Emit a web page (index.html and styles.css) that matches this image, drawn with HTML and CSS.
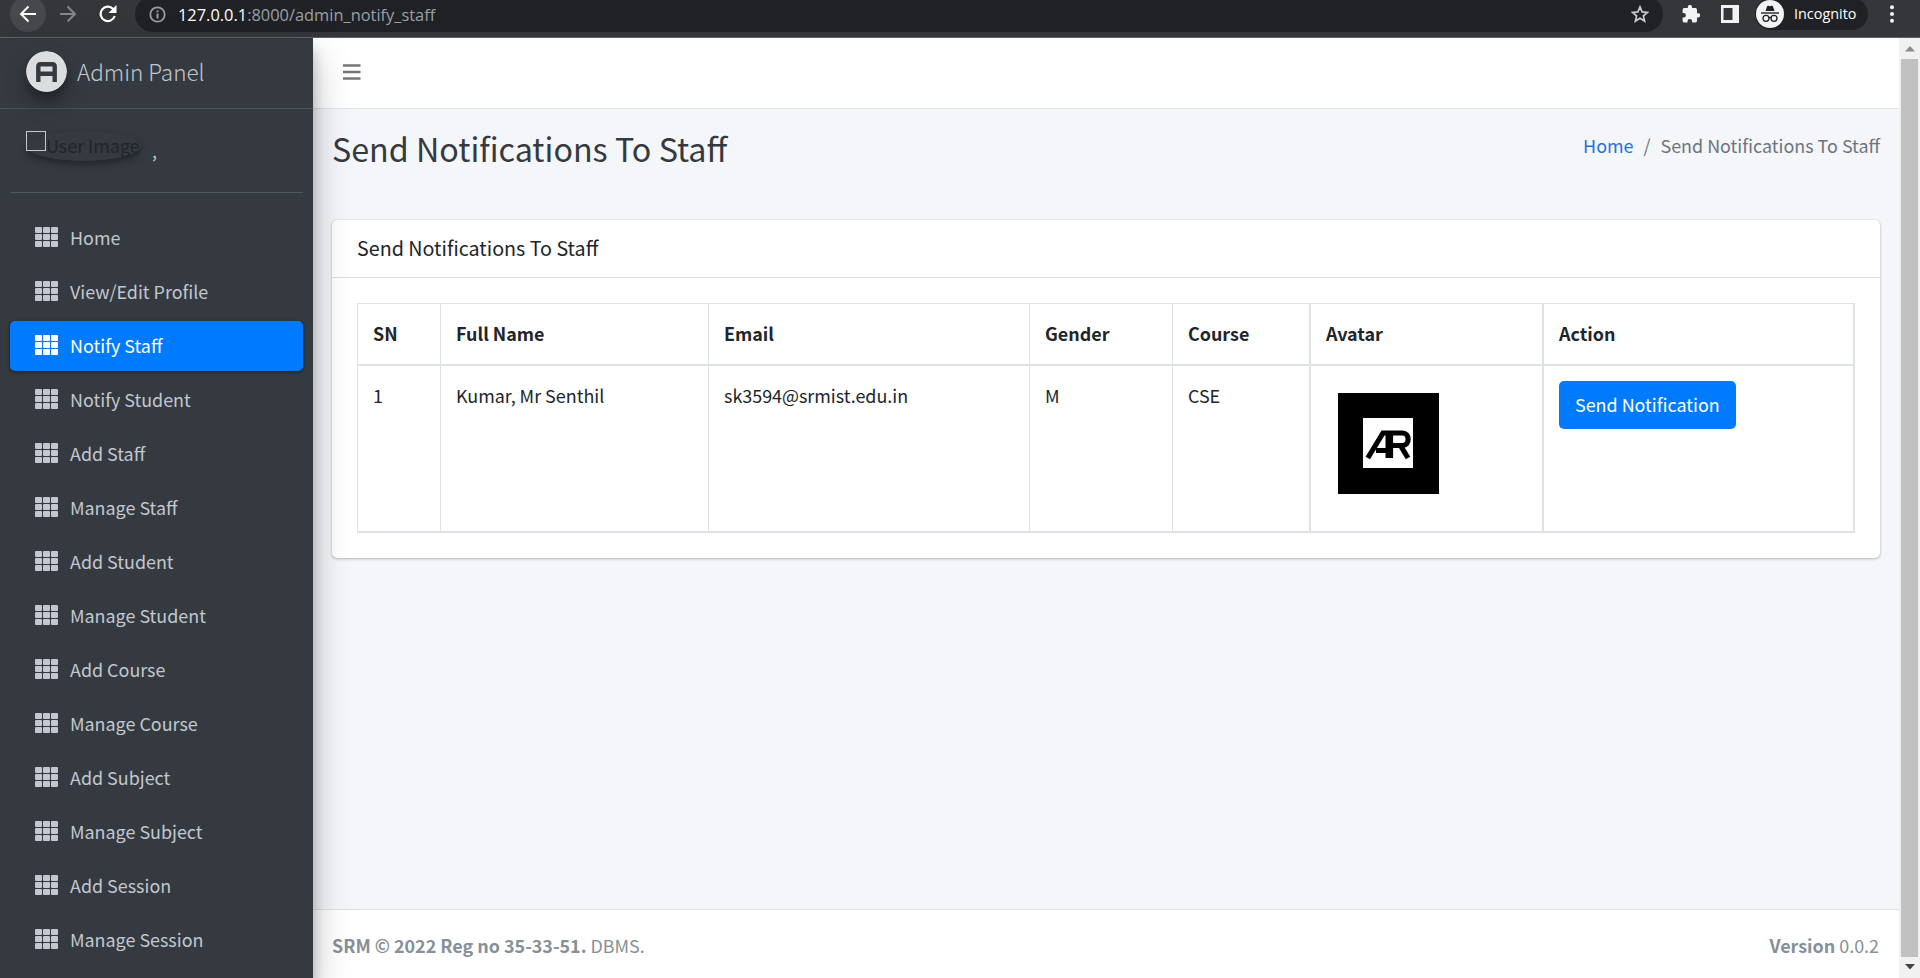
FILE: index.html
```
<!DOCTYPE html>
<html lang="en">
<head>
<meta charset="utf-8">
<title>Send Notifications To Staff</title>
<link rel="stylesheet" href="styles.css">
</head>
<body>
<svg class="defs" aria-hidden="true">
  <symbol id="grid" viewBox="0 0 23 20">
    <g fill="currentColor">
      <rect x="0" y="0" width="7" height="6" rx="1"/><rect x="8" y="0" width="7" height="6" rx="1"/><rect x="16" y="0" width="7" height="6" rx="1"/>
      <rect x="0" y="7" width="7" height="6" rx="1"/><rect x="8" y="7" width="7" height="6" rx="1"/><rect x="16" y="7" width="7" height="6" rx="1"/>
      <rect x="0" y="14" width="7" height="6" rx="1"/><rect x="8" y="14" width="7" height="6" rx="1"/><rect x="16" y="14" width="7" height="6" rx="1"/>
    </g>
  </symbol>
</svg>
<header class="browser">
  <span class="back"><svg width="18" height="18" viewBox="0 0 18 18" fill="none" stroke="#fff" stroke-width="2"><path d="M17 9H2M9.500 1.500 2 9l7.500 7.500"/></svg></span>
  <svg class="fwd" width="18" height="18" viewBox="0 0 18 18" fill="none" stroke="#858689" stroke-width="2"><path d="M1 9h15M8.500 1.500 16 9l-7.500 7.500"/></svg>
  <svg class="reload" width="18" height="18" viewBox="0 0 18 18"><path d="M15.700 11A7.200 7.200 0 1 1 14 3.800L16 6" fill="none" stroke="#fff" stroke-width="2.200"/><path d="M17.500 0v8h-8z" fill="#fff"/></svg>
  <div class="address">
    <svg width="17" height="17" viewBox="0 0 17 17"><circle cx="8.500" cy="8.500" r="7.200" fill="none" stroke="#9a9da1" stroke-width="1.800"/><path d="M7.500 7.400h2v5h-2zM7.500 4.400h2v1.800h-2z" fill="#9a9da1"/></svg>
    <span class="url"><b>127.0.0.1</b>:8000/admin_notify_staff</span>
    <svg class="star" width="18" height="18" viewBox="0 0 18 18"><path d="m9 1.900 2.100 5 5.300.500-4 3.500 1.200 5.200L9 13.300l-4.600 2.800 1.200-5.200-4-3.500 5.300-.500z" fill="none" stroke="#c9cacd" stroke-width="1.700"/></svg>
  </div>
  <svg class="puzzle" width="18" height="18" viewBox="0 0 18 18"><path d="M16.200 8.200H15V4.700A1.700 1.700 0 0 0 13.300 3H10V2a2.100 2.100 0 0 0-4.200 0v1H2.300A1.700 1.700 0 0 0 .6 4.700v3.200h1a2.300 2.300 0 0 1 0 4.600h-1v3.200a1.700 1.700 0 0 0 1.700 1.700h3.200v-1.200a2.300 2.300 0 0 1 4.600 0v1.200h3.200a1.700 1.700 0 0 0 1.700-1.700v-3.300h1.200a2.100 2.100 0 0 0 0-4.200z" fill="#f1f3f4"/></svg>
  <svg class="panel" width="18" height="18" viewBox="0 0 18 18"><path d="M0 0h18v18H0z" fill="#f1f3f4"/><path d="M2.500 3h9v12h-9z" fill="#35363a"/></svg>
  <div class="incognito">
    <svg width="28" height="28" viewBox="0 0 28 28"><circle cx="14" cy="14" r="14" fill="#f1f3f4"/><path d="M9.500 11 11 6.500q.4-1 1.400-.7l1.600.5 1.600-.5q1-.3 1.400.7l1.500 4.500z" fill="#202124"/><path d="M5 13h18" stroke="#202124" stroke-width="1.400"/><g fill="none" stroke="#202124" stroke-width="1.300"><circle cx="10" cy="18.300" r="3"/><circle cx="18" cy="18.300" r="3"/><path d="M13 18q1-1 2 0"/></g></svg>
    <span>Incognito</span>
  </div>
  <svg class="dots" width="4" height="18" viewBox="0 0 4 18" fill="#f1f3f4"><circle cx="2" cy="2.200" r="2"/><circle cx="2" cy="9" r="2"/><circle cx="2" cy="15.800" r="2"/></svg>
</header>
<div class="app">
  <aside class="sidebar">
    <a class="brand">
      <svg class="logo" width="41" height="41" viewBox="0 0 41 41"><circle cx="20.500" cy="20.500" r="20.500" fill="#dcdddf"/><path d="M12.300 31V15.500q0-2.300 2.300-2.300h11.800q2.300 0 2.300 2.300V31M12.300 22.800h16.400" fill="none" stroke="#343a40" stroke-width="4.400"/></svg>
      <span>Admin Panel</span>
    </a>
    <div class="user">
      <div class="user-image"><i class="broken"></i><span>User Image</span></div>
      <span class="user-name">,</span>
    </div>
    <nav class="nav">
      <a class="item"><svg><use href="#grid"/></svg>Home</a>
      <a class="item"><svg><use href="#grid"/></svg>View/Edit Profile</a>
      <a class="item active"><svg><use href="#grid"/></svg>Notify Staff</a>
      <a class="item"><svg><use href="#grid"/></svg>Notify Student</a>
      <a class="item"><svg><use href="#grid"/></svg>Add Staff</a>
      <a class="item"><svg><use href="#grid"/></svg>Manage Staff</a>
      <a class="item"><svg><use href="#grid"/></svg>Add Student</a>
      <a class="item"><svg><use href="#grid"/></svg>Manage Student</a>
      <a class="item"><svg><use href="#grid"/></svg>Add Course</a>
      <a class="item"><svg><use href="#grid"/></svg>Manage Course</a>
      <a class="item"><svg><use href="#grid"/></svg>Add Subject</a>
      <a class="item"><svg><use href="#grid"/></svg>Manage Subject</a>
      <a class="item"><svg><use href="#grid"/></svg>Add Session</a>
      <a class="item"><svg><use href="#grid"/></svg>Manage Session</a>
    </nav>
  </aside>
  <div class="main">
    <div class="topbar"><svg width="18" height="16" viewBox="0 0 18 16"><path d="M0 1.500h17.500M0 8h17.500M0 14.500h17.500" stroke="#777" stroke-width="2.500"/></svg></div>
    <div class="content">
      <div class="heading">
        <h1>Send Notifications To Staff</h1>
        <div class="crumbs"><a>Home</a><span class="sep">/</span><span>Send Notifications To Staff</span></div>
      </div>
      <section class="card">
        <h3 class="card-title">Send Notifications To Staff</h3>
        <div class="card-body">
          <table class="staff">
            <colgroup><col class="c1"><col class="c2"><col class="c3"><col class="c4"><col class="c5"><col class="c6"><col class="c7"></colgroup>
            <thead><tr><th>SN</th><th>Full Name</th><th>Email</th><th>Gender</th><th>Course</th><th class="thick">Avatar</th><th class="thick">Action</th></tr></thead>
            <tbody><tr>
              <td>1</td><td>Kumar, Mr Senthil</td><td>sk3594@srmist.edu.in</td><td>M</td><td>CSE</td>
              <td class="thick"><svg class="avatar" width="101" height="101" viewBox="0 0 101 101"><path d="M0 0h101v101H0z"/><path d="M25 25h50v50H25z" fill="#fff"/><g fill="none" stroke="#000" stroke-width="5.200"><path d="M29.800 65 45 40h19.500c7.500 0 7.500 12.500 0 12.500H54M38 57.500h11M62.500 52.500l7.500 12.500"/><path d="M51.300 38v27" stroke-width="7.600"/></g></svg></td>
              <td class="thick"><a class="btn">Send Notification</a></td>
            </tr></tbody>
          </table>
        </div>
      </section>
    </div>
    <footer class="footer"><span><b>SRM © 2022 Reg no 35-33-51.</b> DBMS.</span><span><b>Version</b> 0.0.2</span></footer>
  </div>
  <div class="scrollbar">
    <svg width="10" height="6" viewBox="0 0 10 6"><path d="M0 5.500 5 0l5 5.500z" fill="#8b8b8b"/></svg>
    <div class="thumb"></div>
    <svg width="10" height="6" viewBox="0 0 10 6"><path d="M0 0h10L5 5.500z" fill="#444"/></svg>
  </div>
</div>
</body>
</html>
```
FILE: styles.css
```
* { box-sizing: border-box; }
body {
  margin: 0;
  width: 1920px;
  height: 978px;
  overflow: hidden;
  font-family: "Noto Sans CJK SC", "Noto Sans", sans-serif;
  font-size: 17.920px;
  line-height: 30px;
  color: #212529;
  background: #f4f6f9;
}
.defs { display: none; }
svg { flex: none; }

/* Browser toolbar */
.browser {
  display: flex;
  align-items: center;
  height: 38px;
  padding: 0 0 9px;
  background: #35363a;
  border-bottom: 1px solid #606164;
  font-family: "Open Sans", "Noto Sans", sans-serif;
}
.back {
  display: flex;
  align-items: center;
  justify-content: center;
  width: 36px;
  height: 36px;
  margin: 0 0 0 10px;
  border-radius: 50%;
  background: #47484c;
}
.fwd { margin-left: 13px; }
.reload { margin-left: 22px; }
.address {
  display: flex;
  align-items: center;
  width: 1528px;
  height: 36px;
  margin: -1px 0 0 18px;
  padding: 1px 14px 0 14px;
  border-radius: 18px;
  background: #202124;
}
.url {
  margin-left: 12px;
  padding-top: 1px;
  font-size: 16.400px;
  line-height: 24px;
  color: #9aa0a6;
}
.url b { font-weight: 400; color: #fff; }
.star { margin-left: auto; }
.puzzle { margin-left: 19px; }
.panel { margin-left: 21px; }
.incognito {
  display: flex;
  align-items: center;
  gap: 10px;
  width: 113px;
  height: 32px;
  margin: -1px 0 0 16px;
  padding-left: 1px;
  border-radius: 16px;
  background: #202124;
  color: #fff;
  font-size: 14.400px;
}
.dots { margin-left: 22px; }

.app { display: flex; height: 940px; }

/* Sidebar */
.sidebar {
  position: relative;
  z-index: 2;
  width: 313px;
  background: #343a40;
  color: #c2c7d0;
  box-shadow: 0 18px 35px rgba(0, 0, 0, .25), 0 12px 12px rgba(0, 0, 0, .22);
}
.brand {
  display: flex;
  align-items: center;
  gap: 10px;
  height: 71px;
  padding: 0 0 3px 26px;
  border-bottom: 1px solid #4b545c;
  font-size: 22.500px;
  font-weight: 300;
}
.brand span { margin-top: -2px; }
.logo {
  border-radius: 50%;
  box-shadow: 0 12px 25px rgba(0, 0, 0, .19), 0 8px 8px rgba(0, 0, 0, .23);
}
.user {
  display: flex;
  height: 84px;
  margin: 0 10px;
  padding: 22px 0 0 16px;
  border-bottom: 1px solid #4f5962;
}
.user-image {
  display: flex;
  width: 115px;
  height: 30px;
  line-height: 28px;
  border-radius: 50%;
  box-shadow: 0 4px 8px rgba(0, 0, 0, .19), 0 3px 5px rgba(0, 0, 0, .2);
  color: #212529;
}
.broken { width: 20px; height: 20px; border: 1px solid #c2c7d0; }
.user-name { margin: 4px 0 0 11px; }
.nav { display: flex; flex-direction: column; gap: 4px; padding: 20px 10px 0; }
.item {
  display: flex;
  align-items: center;
  height: 50px;
  padding: 0 0 2px 24.500px;
  border-radius: 5px;
}
.item svg { width: 23px; height: 20px; margin-right: 12.500px; }
.active {
  background: #007bff;
  color: #fff;
  box-shadow: 0 1px 4px rgba(0, 0, 0, .2), 0 1px 3px rgba(0, 0, 0, .3);
}

/* Main column */
.main { display: flex; flex-direction: column; width: 1586px; }
.topbar {
  display: flex;
  align-items: center;
  height: 71px;
  padding: 0 0 2px 30px;
  background: #fff;
  border-bottom: 1px solid #dee2e6;
}
.content { flex: 1; padding: 17px 19px 0; }
.heading {
  display: flex;
  justify-content: space-between;
  height: 94px;
}
h1 { margin: 0; font-size: 32.250px; line-height: 44px; font-weight: 400; color: #343a40; }
.crumbs { display: flex; padding-top: 4px; color: #6c757d; }
.crumbs a { color: #1d74e0; }
.sep { margin: 0 10px; }
.card {
  height: 338px;
  border-radius: 5px;
  background: #fff;
  box-shadow: 0 0 1px rgba(0, 0, 0, .2), 0 1px 3px rgba(0, 0, 0, .25);
}
.card-title {
  height: 58px;
  margin: 0;
  padding: 13px 25px 0;
  border-bottom: 1px solid #dfdfdf;
  font-size: 19.700px;
  font-weight: 400;
}
.card-body { padding: 25px 25px 0; }
.staff {
  table-layout: fixed;
  width: 1498px;
  border-spacing: 0;
  border-top: 1px solid #dee2e6;
  border-right: 2px solid #dee2e6;
}
.c1 { width: 83px; }
.c2 { width: 268px; }
.c3 { width: 321px; }
.c4 { width: 143px; }
.c5 { width: 137px; }
.c6 { width: 233px; }
th, td {
  padding: 14px 15px;
  text-align: left;
  vertical-align: top;
  border-left: 1px solid #dee2e6;
  border-bottom: 2px solid #dee2e6;
}
.thick { border-left-width: 2px; }
th { height: 62px; font-weight: 700; }
td { height: 167px; }
.avatar { display: block; margin: 13px 0 0 12px; }
.btn {
  display: inline-block;
  height: 48px;
  margin-top: 1px;
  padding: 8px 16px;
  border-radius: 5px;
  background: #007bff;
  color: #fff;
}
.footer {
  display: flex;
  justify-content: space-between;
  height: 69px;
  padding: 20px 20px 0 19px;
  border-top: 1px solid #dee2e6;
  background: #fff;
  color: #869099;
}
.scrollbar {
  display: flex;
  flex-direction: column;
  align-items: center;
  width: 21px;
  padding: 8px 0;
  background: #f1f1f1;
}
.thumb { flex: 1; width: 17px; margin: 7px 0; background: #c1c1c1; }
```
